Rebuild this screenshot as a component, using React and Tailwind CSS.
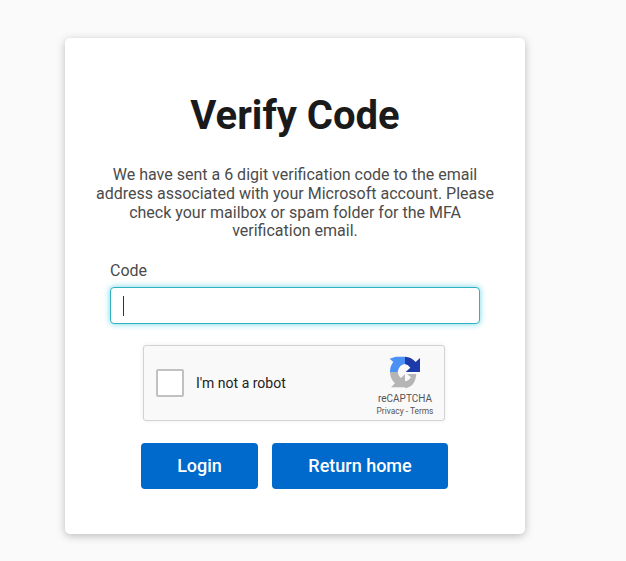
export default function App() {
  return (
    <div className="min-h-[561px] bg-[#fafafa] pt-[38px] pl-[65px] font-['Roboto',sans-serif]">
      <div className="w-[460px] h-[496px] bg-white rounded-[5px] shadow-[0_2px_8px_rgba(0,0,0,0.25)] flex flex-col items-center pt-[54px]">
        <h1 className="text-[40px] leading-[47px] font-bold text-[#1a1a1a]">Verify Code</h1>
        <p className="mt-[27px] w-[410px] text-center text-[16px] leading-[18.75px] text-[#4b4b4b]">
          We have sent a 6 digit verification code to the email address associated with your Microsoft account. Please check your mailbox or spam folder for the MFA verification email.
        </p>
        <div className="mt-[20px] w-[370px]">
          <label className="block text-[16px] leading-[19px] text-[#4b4b4b] mb-[7px]">Code</label>
          <div className="h-[37px] rounded-[4px] border border-[#2eb2c2] shadow-[0_0_6px_rgba(64,200,220,0.75)] bg-white flex items-center pl-[12px]">
            <div className="w-px h-[20px] bg-[#333333]" />
          </div>
        </div>
        <div className="mt-[21px] self-start ml-[78px] w-[302px] h-[76px] bg-[#f9f9f9] border border-[#d3d3d3] rounded-[3px] shadow-[0_0_4px_rgba(0,0,0,0.08)] flex items-center pl-[12px] pr-[9px]">
          <div className="w-[28px] h-[28px] bg-white border-2 border-[#c1c1c1] rounded-[2px]" />
          <span className="ml-[12px] text-[14px] text-[#222222] font-normal">I'm not a robot</span>
          <div className="ml-auto self-start mt-[6px] flex flex-col items-center w-[60px]">
            <svg width="40" height="40" viewBox="0 0 120 120">
              <path d="M32 14 L60 14 L60 36 Q42 38 38 60 L15 60 Q15 42 25 30 L14 20 Z" fill="#4a90f5" />
              <path d="M60 14 Q80 15 92 30 L105 18 L105 60 L62 60 L76 47 Q70 38 60 36 Z" fill="#1c3aa9" />
              <path d="M15 60 L38 60 Q40 72 48 78 L60 66 L60 106 L18 106 L30 94 Q15 80 15 60 Z" fill="#b5b5b5" />
              <path d="M60 88 Q70 88 78 76 L66 66 L94 66 Q90 106 60 108 Z" fill="#b5b5b5" />
            </svg>
            <span className="mt-[1px] text-[10px] leading-[12px] text-[#555555]">reCAPTCHA</span>
            <span className="text-[8.4px] leading-[12px] text-[#555555]">Privacy - Terms</span>
          </div>
        </div>
        <div className="mt-[22px] self-start ml-[76px] flex gap-[14px]">
          <button className="w-[117px] h-[46px] pb-[2px] rounded-[4px] bg-[#0069cc] text-white text-[18px] font-medium">Login</button>
          <button className="w-[176px] h-[46px] pb-[2px] rounded-[4px] bg-[#0069cc] text-white text-[18px] font-medium">Return home</button>
        </div>
      </div>
    </div>
  );
}
